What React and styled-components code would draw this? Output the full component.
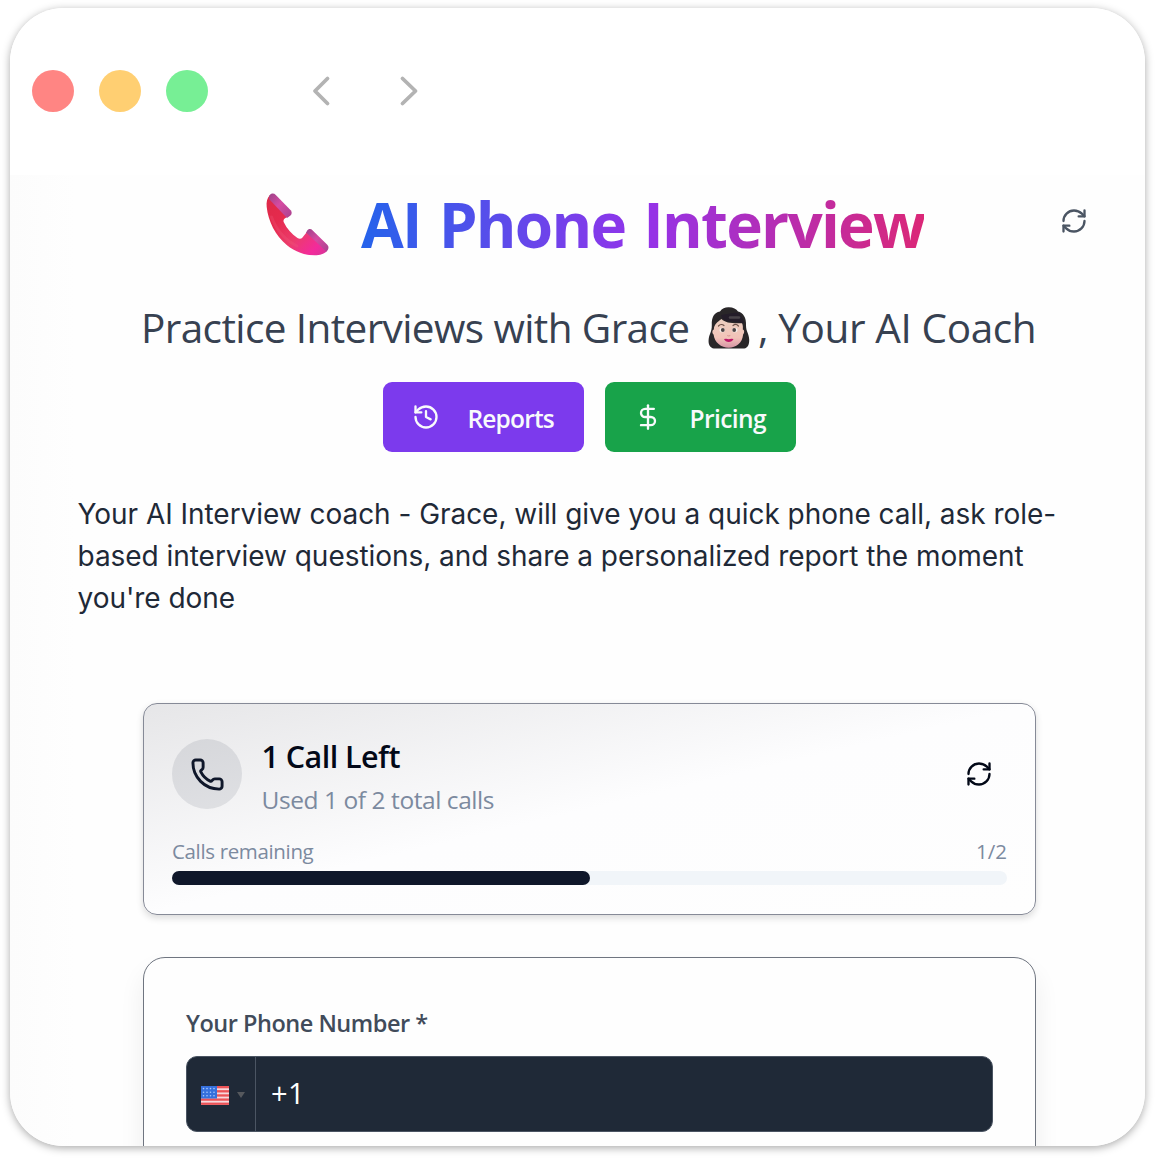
import React from 'react';
import styled, { createGlobalStyle } from 'styled-components';
import { RefreshCw, History, DollarSign, Phone } from 'lucide-react';

const GlobalStyle = createGlobalStyle`
  *, *::before, *::after { box-sizing: border-box; }
  body { margin: 0; background: #fff; font-family: "Open Sans", "Noto Sans", sans-serif; }
  h1, h2, h3, p { margin: 0; }
`;

const Stage = styled.div`
  height: 1164px;
  padding: 7.5px 13px 18.5px 10px;
  overflow: hidden;
`;

const Window = styled.div`
  height: 100%;
  display: flex;
  flex-direction: column;
  border-radius: 54px;
  overflow: hidden;
  background: #fefefe;
  box-shadow: 0 2px 9px rgba(0, 0, 0, 0.34);
`;

const Toolbar = styled.header`
  flex: none;
  height: 167.5px;
  display: flex;
  align-items: center;
  padding: 0 22.4px;
  background: #fff;
`;

const Lights = styled.div`
  display: flex;
  gap: 25px;
`;

const Light = styled.span`
  width: 42px;
  height: 42px;
  border-radius: 50%;
  background: ${(p) => p.$color};
`;

const NavArrows = styled.div`
  display: flex;
  gap: 64px;
  margin-left: 99.6px;

  svg {
    display: block;
    width: 24px;
    height: 32px;
    fill: none;
    stroke: #b3b3b3;
    stroke-width: 3.8;
    stroke-linecap: round;
    stroke-linejoin: round;
  }
`;

const Content = styled.main`
  flex: 1;
  min-height: 0;
  background: linear-gradient(to right, #fcfcfc, #fefefe 65px);
`;

const Hero = styled.section`
  display: flex;
  align-items: flex-start;
  height: 122px;
  padding: 8px 57px 0 256px;
`;

const HeroPhone = styled.svg`
  width: 64px;
  height: 64px;
  margin: 10px 31px 0 0;
`;

const Title = styled.h1`
  margin-top: 0.5px;
  font-size: 62px;
  line-height: 80px;
  font-weight: 700;
  letter-spacing: -1.75px;
  word-spacing: 3.5px;
  white-space: nowrap;
  color: transparent;
  background: linear-gradient(to right, #2563eb, #9333ea 50%, #db2777);
  background-clip: text;
  -webkit-background-clip: text;
`;

const IconButton = styled.button`
  display: grid;
  place-items: center;
  width: 28px;
  height: 28px;
  margin: ${(p) => p.$margin || '0'};
  padding: 0;
  border: 0;
  background: none;
  color: ${(p) => p.$color};
`;

const Subtitle = styled.h2`
  display: flex;
  margin-left: 131px;
  height: 60px;
  font-size: 40.5px;
  line-height: 62px;
  font-weight: 400;
  letter-spacing: -0.6px;
  color: #374151;
  white-space: pre;

  svg {
    width: 42px;
    height: 42px;
    margin: 9.5px 8px 0 18.5px;
  }

  span:last-child { letter-spacing: -0.38px; }
`;

const Actions = styled.div`
  display: flex;
  gap: 21px;
  margin: 25px 0 0 373px;
`;

const ActionButton = styled.button`
  display: flex;
  align-items: center;
  width: ${(p) => p.$width}px;
  height: 69.5px;
  padding: 0 0 0 29px;
  gap: 27.5px;
  border: 0;
  border-radius: 9px;
  background: ${(p) => p.$color};
  color: #f8fafc;
  font: 600 24.5px/30px "Open Sans", sans-serif;
  letter-spacing: ${(p) => p.$tracking}px;

  span { padding-top: 4px; }
`;

const Intro = styled.p`
  margin: 41.5px 80px 0 67.5px;
  font: 400 28px/42px Inter, sans-serif;
  letter-spacing: -0.04px;
  color: #1f2937;
`;

const Card = styled.section`
  margin: 0 109px 0 133px;
  border: 1px solid #868a97;
`;

const QuotaCard = styled(Card)`
  margin-top: 84px;
  height: 212px;
  padding: 30px 28px 0;
  border-width: 1.5px;
  border-radius: 14px;
  background: linear-gradient(to bottom right, #e6e6e8, #fdfdfe 50%, #fefefe);
  box-shadow: 0 3px 7px rgba(0, 0, 0, 0.14);
`;

const QuotaHead = styled.div`
  display: flex;
  align-items: flex-start;
  height: 97px;
`;

const PhoneBadge = styled.div`
  display: grid;
  place-items: center;
  width: 70px;
  height: 70px;
  margin-top: 5px;
  border-radius: 50%;
  background: rgba(15, 23, 42, 0.09);
  color: #0f172a;
`;

const QuotaText = styled.div`
  flex: 1;
  padding-left: 19.5px;
`;

const QuotaTitle = styled.h3`
  font-size: 30.5px;
  line-height: 44px;
  font-weight: 600;
  letter-spacing: -0.54px;
  color: #020817;
`;

const QuotaNote = styled.p`
  margin-top: 4px;
  font-size: 24.5px;
  line-height: 35px;
  letter-spacing: -0.43px;
  color: #7c8a9f;
`;

const MeterLabels = styled.div`
  display: flex;
  justify-content: space-between;
  margin-top: 5.5px;
  height: 34.5px;
  font-size: 20.5px;
  line-height: 28px;
  letter-spacing: -0.35px;
  color: #7c8a9f;

  span:last-child { letter-spacing: 0; }
`;

const Meter = styled.div`
  height: 14px;
  border-radius: 7px;
  overflow: hidden;
  background: #f1f5f9;
`;

const MeterFill = styled.div`
  width: 50%;
  height: 100%;
  border-radius: 0 7px 7px 0;
  background: #0f172a;
`;

const FormCard = styled(Card)`
  margin-top: 42px;
  height: 260px;
  padding: 48px 42px 0;
  border-radius: 22px;
  border-color: #6f7580;
  background: #fefefe;
  box-shadow: 0 14px 26px rgba(0, 0, 0, 0.07);
`;

const FieldLabel = styled.label`
  display: block;
  height: 50px;
  font-size: 23.5px;
  line-height: 35px;
  font-weight: 600;
  letter-spacing: -0.48px;
  color: #414b5a;
`;

const PhoneField = styled.div`
  display: flex;
  height: 76px;
  border: 1px solid #4b5563;
  border-radius: 11px;
  overflow: hidden;
  background: #1f2937;
`;

const CountryPicker = styled.div`
  display: flex;
  align-items: center;
  gap: 8px;
  width: 69px;
  padding: 2px 0 0 14px;
  border-right: 1.5px solid #4b5563;
`;

const Caret = styled.span`
  border: 4px solid transparent;
  border-top: 6px solid #55585d;
  border-bottom: 0;
`;

const DialCode = styled.span`
  padding-left: 15px;
  font-size: 29px;
  line-height: 72px;
  letter-spacing: 0.5px;
  color: #fff;
`;

const PhoneEmoji = () => (
  <HeroPhone viewBox="0 0 64 64">
    <defs>
      <linearGradient id="handset" x1="0" y1="0" x2="1" y2="1">
        <stop offset="0" stopColor="#dd2a48" />
        <stop offset=".3" stopColor="#e52a4d" />
        <stop offset=".6" stopColor="#ec3c6c" />
        <stop offset=".85" stopColor="#f32a9c" />
        <stop offset="1" stopColor="#d33697" />
      </linearGradient>
      <linearGradient id="cap" x1="0" y1="0" x2="1" y2="1">
        <stop offset="0" stopColor="#9c4288" />
        <stop offset=".45" stopColor="#d64ba2" />
        <stop offset="1" stopColor="#a9428f" />
      </linearGradient>
    </defs>
    <path d="M4 2C1 5 .2 9 .7 14c1.300 14 9 29 20 38 9 7.500 20 10.800 30 10.300 5-.3 8.500-2 10.300-4.500L42 37.500l-5.500 7c-1.300 1.500-3.400 1.500-5 .4-6-4-10.500-9-13.700-15.700-.7-1.500-.2-3 1.300-4l3.500-2.200z" fill="url(#handset)" />
    <path d="M3.500 2.500C5 .3 7.700-.1 9.800 2L24.700 17.300c1.500 1.700 1.200 4.200-.5 5.500L21 25 3 6z" fill="url(#cap)" />
    <path d="M40 39.500l1-1.500c1.300-2.200 3.700-2.600 5.700-.6l14.600 14.300c1.800 1.800 1.700 4.500-.8 7z" fill="url(#cap)" />
    <path d="M5.500 24C10 36 19 47 31 53" fill="none" stroke="#f06080" strokeWidth="3" strokeLinecap="round" opacity=".25" />
  </HeroPhone>
);

const WomanEmoji = () => (
  <svg viewBox="0 0 42 42">
    <defs>
      <linearGradient id="skin" x1="0" y1="0" x2="0" y2="1">
        <stop offset="0" stopColor="#eccfc0" />
        <stop offset=".65" stopColor="#f2c3b8" />
        <stop offset="1" stopColor="#d795a5" />
      </linearGradient>
    </defs>
    <path d="M12 4.500C14 1.300 18 0 21 .3c4 0 7.500 1.800 9 4.200 5 1 8.500 6 8 14 0 6 3 8 3.200 14 .2 5-1.500 8.500-5 9H6c-4-.5-5.700-4-5.400-8.500C1 27 4 25 3.800 18 3.500 10.500 6 5.500 12 4.500z" fill="#292628" />
    <path d="M13.500 12c4 4 10 4.500 20.500 4.200 1 2 1 4 .8 6.300 1.800.3 1.800 3.500.3 5-.7 8.500-7 13.200-14.400 13.200S6.400 35.500 5.600 27.500c-1.700-1.300-1.600-4.500.3-5C5.800 17.500 9.500 15 13.500 12z" fill="url(#skin)" />
    <path d="M13 8c1 5 6 7 12 6.500l11 1.700c-.5-5-4-10-8-10.700z" fill="#241d29" />
    <path d="M22 10.500h9" stroke="#494449" strokeWidth="2.500" strokeLinecap="round" />
    <path d="M10.500 19c1.500-1.700 4-1.700 5.500-.5M25 18.500c1.700-1.300 4-1.100 5.400.5" fill="none" stroke="#6d5148" strokeWidth="1.200" strokeLinecap="round" />
    <ellipse cx="14.200" cy="23" rx="2.700" ry="2.300" fill="#f5efec" />
    <ellipse cx="26.800" cy="23" rx="2.700" ry="2.300" fill="#f5efec" />
    <circle cx="14.800" cy="23" r="1.900" fill="#4d4445" />
    <circle cx="26.200" cy="23" r="1.900" fill="#4d4445" />
    <path d="M19.300 28.500q1.500 1 3 0" fill="none" stroke="#d59291" strokeWidth="1" />
    <path d="M16 32q2.500-.5 4.700.2 2.300-.7 4.800-.2c-1.500 4-8 4-9.500 0z" fill="#bd1667" />
  </svg>
);

const FlagIcon = styled.svg`
  width: 28px;
  height: 19px;
  flex: none;
`;

const UsFlag = () => (
  <FlagIcon viewBox="0 0 28 19">
    <rect width="28" height="19" fill="#f6d9dc" />
    {[0, 1, 2, 3, 4].map((i) => (
      <rect key={i} y={i * 4.15} width="28" height="2.300" fill="#ec5357" />
    ))}
    <rect width="16" height="12.500" fill="#3670dc" />
    {[2.6, 6.2, 9.8].map((y) =>
      [2.5, 6, 9.5, 13].map((x) => <circle key={`${x}-${y}`} cx={x} cy={y} r=".8" fill="#a9cbff" />)
    )}
  </FlagIcon>
);

export default function App() {
  return (
    <Stage>
      <GlobalStyle />
      <Window>
        <Toolbar>
          <Lights>
            <Light $color="#ff8583" />
            <Light $color="#ffcf72" />
            <Light $color="#77ef95" />
          </Lights>
          <NavArrows>
            <svg viewBox="0 0 24 32"><path d="M19.500 3.500 7 16l12.500 12.500" /></svg>
            <svg viewBox="0 0 24 32"><path d="M6.500 3.500 19.500 16l-13 12.500" /></svg>
          </NavArrows>
        </Toolbar>
        <Content>
          <Hero>
            <PhoneEmoji />
            <Title>AI Phone Interview</Title>
            <IconButton $color="#4b5563" $margin="24px 0 0 auto" aria-label="Refresh">
              <RefreshCw size={28} />
            </IconButton>
          </Hero>
          <Subtitle>
            <span>Practice Interviews with Grace</span>
            <WomanEmoji />
            <span>, Your AI Coach</span>
          </Subtitle>
          <Actions>
            <ActionButton $color="#7c3aed" $width={201} $tracking={-0.83}>
              <History size={28} />
              <span>Reports</span>
            </ActionButton>
            <ActionButton $color="#18a34a" $width={191} $tracking={-0.6}>
              <DollarSign size={28} />
              <span>Pricing</span>
            </ActionButton>
          </Actions>
          <Intro>
            Your AI Interview coach - Grace, will give you a quick phone call, ask role-based interview
            questions, and share a personalized report the moment you're done
          </Intro>
          <QuotaCard>
            <QuotaHead>
              <PhoneBadge><Phone size={35} /></PhoneBadge>
              <QuotaText>
                <QuotaTitle>1 Call Left</QuotaTitle>
                <QuotaNote>Used 1 of 2 total calls</QuotaNote>
              </QuotaText>
              <IconButton $color="#020817" $margin="26px 14px 0 0" aria-label="Refresh calls">
                <RefreshCw size={28} />
              </IconButton>
            </QuotaHead>
            <MeterLabels>
              <span>Calls remaining</span>
              <span>1/2</span>
            </MeterLabels>
            <Meter><MeterFill /></Meter>
          </QuotaCard>
          <FormCard>
            <FieldLabel>Your Phone Number *</FieldLabel>
            <PhoneField>
              <CountryPicker>
                <UsFlag />
                <Caret />
              </CountryPicker>
              <DialCode>+1</DialCode>
            </PhoneField>
          </FormCard>
        </Content>
      </Window>
    </Stage>
  );
}
